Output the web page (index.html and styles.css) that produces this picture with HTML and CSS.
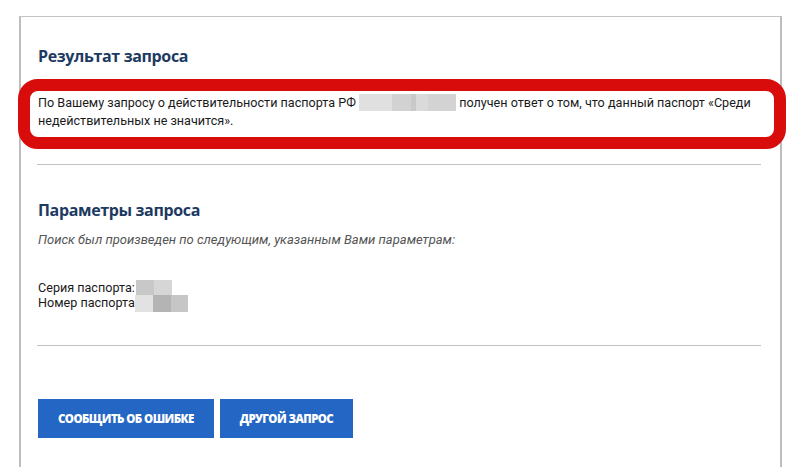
FILE: index.html
```html
<!DOCTYPE html>
<html lang="ru">
<head>
    <meta charset="UTF-8">
    <meta name="viewport" content="width=device-width, initial-scale=1.0">
    <title>Результат запроса</title>
    <link rel="stylesheet" href="styles.css">
</head>
<body>
<div class="page">
    <div class="panel">
        <h2 class="title">Результат запроса</h2>

        <!-- ответ сервиса, обведён красным -->
        <div class="answer">
            По Вашему запросу о действительности паспорта РФ <span class="blur blur-main"></span> получен ответ о том, что данный паспорт «Среди недействительных не значится».
        </div>

        <hr class="line">

        <h2 class="title title-params">Параметры запроса</h2>
        <p class="hint">Поиск был произведен по следующим, указанным Вами параметрам:</p>

        <div class="params">
            <div>Серия паспорта:<span class="blur blur-series"></span></div>
            <div>Номер паспорта<span class="blur blur-number"></span></div>
        </div>

        <hr class="line line-bottom">

        <div class="buttons">
            <button class="btn btn-report">Сообщить об ошибке</button>
            <button class="btn btn-new">Другой запрос</button>
        </div>
    </div>
</div>
</body>
</html>
```

FILE: styles.css
```css
body {
    margin: 0;
    background: #fff;
    font-family: Roboto, "Noto Sans", sans-serif;
    color: #1a1a1a;
}
.page {
    padding: 16px 18px 0 19px;
}
.panel {
    box-sizing: border-box;
    height: 451px;
    border-top: 1px solid #c4c4c4;
    border-left: 2px solid #bdbdbd;
    border-right: 2px solid #bdbdbd;
    padding: 27px 19px 0 17px;
}
.title {
    margin: 0;
    font-family: "Open Sans", sans-serif;
    font-weight: 700;
    font-size: 16px;
    line-height: 24px;
    color: #1d3a62;
    letter-spacing: -0.35px;
}
.answer {
    margin: 11px -25px 0 -20px;
    border: 12px solid #d90c0c;
    border-radius: 20px;
    padding: 3px 6px 7px 8px;
    font-size: 12.6px;
    line-height: 18px;
}
.blur {
    display: inline-block;
    vertical-align: middle;
}
.blur-main {
    width: 97px;
    height: 17px;
    margin-top: -3px;
    background: linear-gradient(to right, #e0e0e0 0 33px, #d2d2d2 33px 52px, #c9c9c9 52px 57px, #dadada 57px 69px, #d3d3d3 69px 97px);
}
.line {
    margin: 15px 0 0 -1px;
    border: 0;
    border-top: 1px solid #c2c2c2;
}
.title-params {
    margin-top: 33px;
}
.hint {
    margin: 9px 0 0;
    font-size: 13px;
    line-height: 18px;
    font-style: italic;
    color: #555;
}
.params {
    margin-top: 31px;
    font-size: 12.6px;
    line-height: 15px;
}
.params div {
    display: flex;
    align-items: center;
    height: 15px;
}
.blur-series {
    width: 36px;
    height: 15px;
    margin-left: 1px;
    background: linear-gradient(to right, #c8c8c8 0 18px, #d6d6d6 18px 36px);
}
.blur-number {
    width: 53px;
    height: 17px;
    margin-top: 2px;
    background: linear-gradient(to right, #e2e2e2 0 18px, #b4b4b4 18px 36px, #c6c6c6 36px 53px);
}
.line-bottom {
    margin-top: 35px;
}
.buttons {
    display: flex;
    gap: 6px;
    margin-top: 53px;
}
.btn {
    height: 39px;
    border: 0;
    padding: 0 20px;
    background: #2366c4;
    color: #fff;
    font-family: "Open Sans", sans-serif;
    font-weight: 800;
    font-size: 11.5px;
    letter-spacing: -0.6px;
    text-transform: uppercase;
}
```
